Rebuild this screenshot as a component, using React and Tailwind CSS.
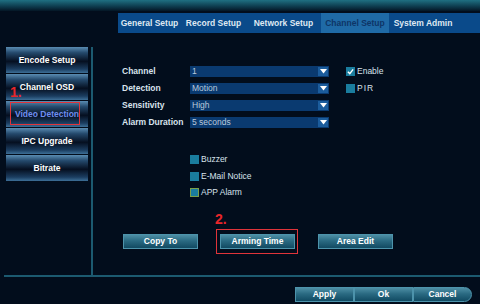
import React from 'react';

const font = { fontFamily: '"Liberation Sans", Arial, sans-serif' };

const tabs = [
  { label: 'General Setup', w: 'w-[63px]' },
  { label: 'Record Setup', w: 'w-[65px]' },
  { label: 'Network Setup', w: 'w-[75px]' },
  { label: 'Channel Setup', w: 'w-[68px]', active: true },
  { label: 'System Admin', w: 'w-[68px]' },
];

const sideItems = ['Encode Setup', 'Channel OSD', 'Video Detection', 'IPC Upgrade', 'Bitrate'];

const rows = [
  ['Channel', '1'],
  ['Detection', 'Motion'],
  ['Sensitivity', 'High'],
  ['Alarm Duration', '5 seconds'],
];

function Check({ checked, green }) {
  return (
    <span
      className={
        'inline-flex items-center justify-center w-[9px] h-[9px] mr-[2px] bg-[#1a7d9e] ' +
        (green ? 'border border-[#7aa04a]' : '')
      }
    >
      {checked && (
        <svg width="7" height="7" viewBox="0 0 8 8">
          <path d="M1 4.2 L3.2 6.4 L7 1.6" stroke="#fff" strokeWidth="1.6" fill="none" />
        </svg>
      )}
    </span>
  );
}

function Select({ value }) {
  return (
    <div className="w-[139px] h-[11px] bg-[#0a3a70] flex items-center justify-between pl-[2px] pr-[1px]">
      <span className="text-[8.5px] text-[#b9c9dc] leading-none">{value}</span>
      <span className="w-[10px] h-[9px] bg-[#1b5c9c] flex items-center justify-center">
        <svg width="7" height="5" viewBox="0 0 7 5">
          <path d="M0 0 H7 L3.5 4.5 Z" fill="#fff" />
        </svg>
      </span>
    </div>
  );
}

function TealButton({ children, className = '' }) {
  return (
    <div
      className={
        'h-[15px] flex items-center justify-center text-[8.5px] font-bold text-white border border-[#4d93ab] bg-[linear-gradient(to_bottom,#4d8ea4_0%,#2a6a82_45%,#114a62_100%)] ' +
        className
      }
    >
      {children}
    </div>
  );
}

export default function App() {
  return (
    <div className="w-[480px] h-[304px] bg-[#020d1c] flex flex-col overflow-hidden" style={font}>
      <div className="h-[11px] bg-[linear-gradient(to_bottom,#1f7082,#0d3a4c_60%,#041625)]" />
      <div className="mt-[2px] ml-[118px] flex h-[20px] bg-[#0a4a8a]">
        {tabs.map((t) => (
          <div
            key={t.label}
            className={
              'flex items-center justify-center text-[8.5px] font-bold ' +
              t.w +
              (t.active ? ' bg-[#1f6aa6] text-[#0e3566]' : ' text-[#dfe8f2]')
            }
          >
            {t.label}
          </div>
        ))}
      </div>

      <div className="flex h-[242px]">
        <div className="w-[91px] pt-[14px] pl-[6px] flex flex-col gap-[1px]">
          {sideItems.map((s, i) => (
            <div
              key={s}
              className={
                'relative w-[82px] h-[26px] flex items-center justify-center text-[8.5px] font-bold bg-[linear-gradient(to_bottom,#5a8cb2_0%,#24496c_22%,#050f20_55%,#1b3d60_85%,#3d6f97_100%)] ' +
                (i === 2 ? 'text-[#6f8ff0]' : 'text-white')
              }
            >
              {s}
              {i === 1 && (
                <span className="absolute left-[4px] top-[11px] text-[14px] font-bold text-[#e8262a] leading-none">
                  1.
                </span>
              )}
              {i === 2 && (
                <span className="absolute left-[4px] top-[1px] w-[70px] h-[23px] border-[1.5px] border-[#e0343a]" />
              )}
            </div>
          ))}
        </div>

        <div className="flex-1 mt-[14px] border-l-2 border-[#1c5a70] pl-[29px] pt-[16px] relative">
          <div className="flex">
            <div className="flex flex-col">
              {rows.map(([label, value]) => (
                <div key={label} className="h-[17px] flex items-center">
                  <span className="w-[68px] text-[8.5px] font-bold text-[#d8e2ec]">{label}</span>
                  <Select value={value} />
                </div>
              ))}
            </div>
            <div className="ml-[17px] flex flex-col">
              <div className="h-[17px] flex items-center text-[8.5px] text-[#d8e2ec]">
                <Check checked />
                Enable
              </div>
              <div className="h-[17px] flex items-center text-[8.5px] text-[#d8e2ec] tracking-[1px]">
                <Check />
                PIR
              </div>
            </div>
          </div>

          <div className="ml-[68px] mt-[20px] flex flex-col">
            <div className="h-[17px] flex items-center text-[8.5px] text-[#d8e2ec]">
              <Check />
              Buzzer
            </div>
            <div className="h-[16px] flex items-center text-[8.5px] text-[#d8e2ec]">
              <Check />
              E-Mail Notice
            </div>
            <div className="h-[17px] flex items-center text-[8.5px] text-[#d8e2ec]">
              <Check green />
              APP Alarm
            </div>
          </div>

          <div className="mt-[33px] flex gap-[22px] ml-[1px]">
            <TealButton className="w-[75px]">Copy To</TealButton>
            <div className="relative">
              <TealButton className="w-[75px]">Arming Time</TealButton>
              <span className="absolute left-[-5px] top-[-22px] text-[14px] font-bold text-[#e8262a] leading-none">
                2.
              </span>
              <span className="absolute left-[-4px] top-[-5px] w-[82px] h-[25px] border-[1.5px] border-[#e0343a]" />
            </div>
            <TealButton className="w-[75px] ml-[1px]">Area Edit</TealButton>
          </div>
        </div>
      </div>

      <div className="ml-[4px] h-[2px] bg-[#1c5a70]" />

      <div className="flex justify-end pr-[8px] pt-[10px]">
        <TealButton className="w-[59px]">Apply</TealButton>
        <TealButton className="w-[59px]">Ok</TealButton>
        <TealButton className="w-[59px] rounded-r-[8px]">Cancel</TealButton>
      </div>
    </div>
  );
}
